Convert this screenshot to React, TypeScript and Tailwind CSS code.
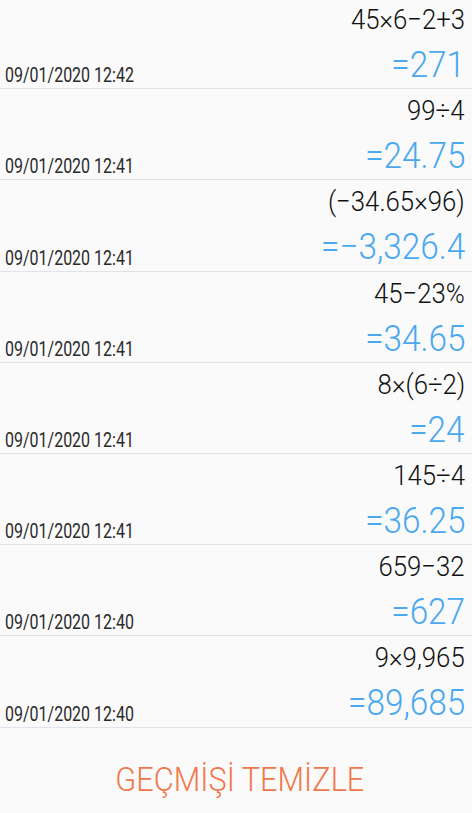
import React from 'react';

type Entry = { expr: string; result: string; date: string };

const history: Entry[] = [
  { expr: '45×6−2+3', result: '=271', date: '09/01/2020 12:42' },
  { expr: '99÷4', result: '=24.75', date: '09/01/2020 12:41' },
  { expr: '(−34.65×96)', result: '=−3,326.4', date: '09/01/2020 12:41' },
  { expr: '45−23%', result: '=34.65', date: '09/01/2020 12:41' },
  { expr: '8×(6÷2)', result: '=24', date: '09/01/2020 12:41' },
  { expr: '145÷4', result: '=36.25', date: '09/01/2020 12:41' },
  { expr: '659−32', result: '=627', date: '09/01/2020 12:40' },
  { expr: '9×9,965', result: '=89,685', date: '09/01/2020 12:40' },
];

const HistoryRow: React.FC<{ entry: Entry }> = ({ entry }) => (
  <div className="flex h-[91.2px] border-b border-[#dfe4ec]">
    <div className="flex self-end pb-[3px] pl-[5px]">
      <span className="origin-left scale-x-[0.78] text-[20.5px] leading-[20px] text-[#2a2a2a] whitespace-nowrap">
        {entry.date}
      </span>
    </div>
    <div className="ml-auto flex flex-col items-end pt-[8px] pr-[7px]">
      <span className="origin-right scale-x-[0.92] text-[28px] font-light leading-[28px] text-[#111] whitespace-nowrap">
        {entry.expr}
      </span>
      <span className="mt-[12px] origin-right scale-x-[0.9] text-[37px] font-light leading-[37px] text-[#4aa8ef] whitespace-nowrap">
        {entry.result}
      </span>
    </div>
  </div>
);

export default function App() {
  return (
    <div className="h-[813px] w-[472px] overflow-hidden bg-[#fafafa] font-['Roboto',sans-serif]">
      <div className="-mt-[2px]">
        {history.map((e, i) => (
          <HistoryRow key={i} entry={e} />
        ))}
      </div>
      <div className="flex justify-center pt-[35px] pl-[7px]">
        <button className="scale-x-[0.93] text-[33px] font-light leading-[33px] text-[#f0774b]">
          GEÇMİŞİ TEMİZLE
        </button>
      </div>
    </div>
  );
}
